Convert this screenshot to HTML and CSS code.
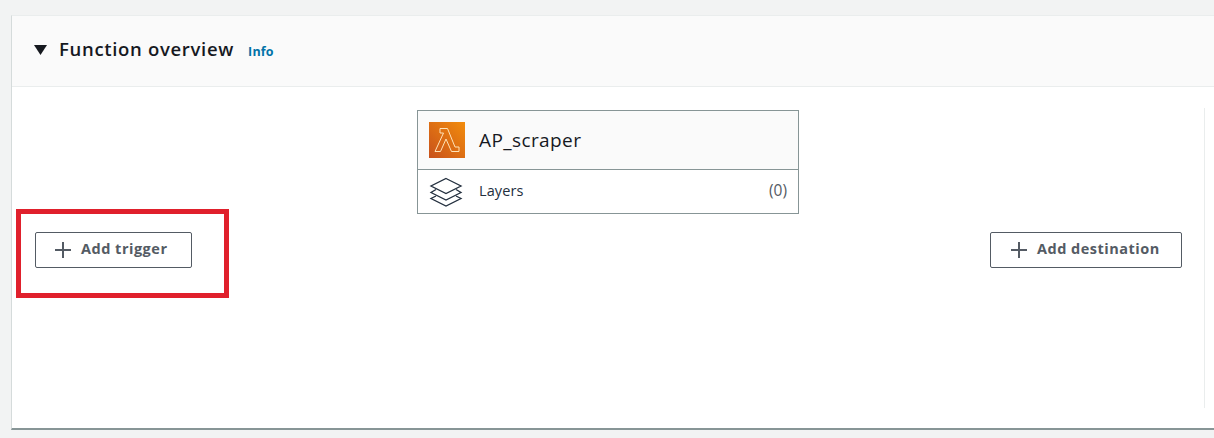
FILE: index.html
```html
<!DOCTYPE html>
<html lang="en">
<head>
<meta charset="utf-8">
<title>Function overview</title>
<link rel="stylesheet" href="styles.css">
</head>
<body>
<section class="card">
  <header class="card-header">
    <svg class="caret" width="13" height="10" viewBox="0 0 13 10"><path d="M0 0h13L6.500 10z" fill="#16191f"/></svg>
    <h2 class="title">Function overview</h2>
    <a class="info">Info</a>
  </header>
  <div class="card-body">
    <div class="diagram">
      <div class="side side-left">
        <button class="btn btn-trigger">
          <svg class="plus" width="18" height="18" viewBox="0 0 18 18"><path d="M9 1v16M1 9h16" stroke="#545b64" stroke-width="2" fill="none"/></svg>
          <span class="btn-label">Add trigger</span>
        </button>
      </div>
      <div class="center">
        <div class="fn">
          <div class="fn-top">
            <svg class="lambda" width="36" height="36" viewBox="0 0 36 36">
              <defs><linearGradient id="g" x1="0" y1="1" x2="1" y2="0"><stop offset="0" stop-color="#c8511b"/><stop offset="1" stop-color="#f28c0c"/></linearGradient></defs>
              <rect width="36" height="36" fill="url(#g)"/>
              <path d="M11 6.500h7.500L26 25h4v4.500h-7.500L17 17l-5.500 12.500H6L14.500 11H11z" fill="none" stroke="#ffe3b8" stroke-width="1"/>
            </svg>
            <span class="fn-name">AP_scraper</span>
          </div>
          <div class="fn-layers">
            <svg class="layers" width="34" height="30" viewBox="0 0 34 30" fill="none" stroke="#232f3e" stroke-width="1.300">
              <path d="M17 1.500l15 7.500-15 7.500L2 9z"/>
              <path d="M7 12.500L2 15.500l15 7.500 15-7.500-5-3"/>
              <path d="M7 19L2 21.500l15 7.500 15-7.500-5-2.500"/>
            </svg>
            <span class="layers-label">Layers</span>
            <span class="layers-count">(0)</span>
          </div>
        </div>
      </div>
      <div class="side side-right">
        <button class="btn btn-dest">
          <svg class="plus" width="18" height="18" viewBox="0 0 18 18"><path d="M9 1v16M1 9h16" stroke="#545b64" stroke-width="2" fill="none"/></svg>
          <span class="btn-label">Add destination</span>
        </button>
      </div>
    </div>
    <div class="highlight"></div>
  </div>
</section>
</body>
</html>
```
FILE: styles.css
```css
* { box-sizing: border-box; }
html, body { height: 100%; }
body {
  margin: 0;
  padding: 15px 0 0 11px;
  background: #f2f3f3;
  font-family: "Open Sans", "Noto Sans", sans-serif;
  overflow: hidden;
}
.card {
  width: 1203px;
  height: 415px;
  background: #fff;
  border-left: 1px solid #d5dbdb;
  border-top: 1px solid #eaeded;
  border-bottom: 2px solid #879596;
  display: flex;
  flex-direction: column;
}
.card-header {
  height: 71px;
  flex: none;
  background: #fafafa;
  border-bottom: 1px solid #eaeded;
  display: flex;
  align-items: center;
  padding: 0 0 0 22px;
}
.caret { margin: -3px 12px 0 0; }
.title {
  margin: -5px 14px 0 0;
  font-size: 18.500px;
  font-weight: 600;
  letter-spacing: 0.68px;
  line-height: 24px;
  color: #16191f;
}
.info {
  font-size: 12.500px;
  font-weight: 700;
  letter-spacing: 0.2px;
  color: #0273a8;
}
.card-body {
  flex: 1;
  position: relative;
  padding: 21px 0 0;
}
.diagram {
  display: grid;
  grid-template-columns: 405px 382px 406px;
  height: 300px;
}
.side-left { padding: 124px 0 0 23px; }
.side-right {
  padding: 124px 22px 0 0;
  display: flex;
  justify-content: flex-end;
  align-items: flex-start;
  border-right: 1px solid #eaeded;
}
.center { padding-top: 2px; }
.btn {
  height: 36px;
  display: inline-flex;
  align-items: center;
  background: #fff;
  border: 1px solid #545b64;
  border-radius: 2px;
  font: 700 14.500px "Open Sans", "Noto Sans", sans-serif;
  letter-spacing: 0.5px;
  color: #545b64;
  padding: 0;
}
.btn-label { margin-top: -3px; }
.btn-trigger { width: 157px; padding-left: 18px; }
.btn-dest { width: 192px; padding-left: 19px; }
.plus { margin-right: 9px; }
.fn {
  height: 104px;
  border: 1px solid #879596;
  display: flex;
  flex-direction: column;
}
.fn-top {
  height: 59px;
  flex: none;
  background: #fafafa;
  border-bottom: 1px solid #879596;
  display: flex;
  align-items: center;
  padding-left: 11px;
}
.fn-name {
  margin: -1px 0 0 14px;
  font-size: 19px;
  letter-spacing: 0.4px;
  color: #16191f;
}
.fn-layers {
  flex: 1;
  display: flex;
  align-items: center;
  padding: 0 11px;
}
.layers-label {
  margin: -3px 0 0 16px;
  font-size: 14.500px;
  letter-spacing: 0.1px;
  color: #232f3e;
}
.layers-count {
  margin: -3px 0 0 auto;
  font-size: 15.500px;
  color: #545b64;
}
.highlight {
  position: absolute;
  left: 4px;
  top: 122px;
  width: 213px;
  height: 89px;
  border: 5px solid #e0202c;
}
```
